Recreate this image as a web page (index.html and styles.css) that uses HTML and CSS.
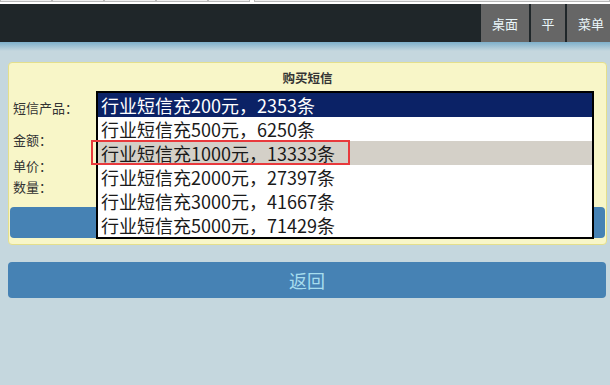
FILE: index.html
```html
<!DOCTYPE html>
<html lang="zh-CN">
<head>
    <meta charset="UTF-8">
    <meta name="viewport" content="width=device-width, initial-scale=1.0">
    <title>购买短信</title>
    <link rel="stylesheet" href="styles.css">
</head>
<body>
    <div class="top-strip">
        <span class="tab"></span>
        <span class="tab"></span>
        <span class="tab"></span>
        <span class="tab"></span>
        <span class="tab gap"></span>
        <span class="tab wide"></span>
    </div>

    <div class="header">
        <div class="nav">
            <a class="nav-item desk">桌面</a>
            <a class="nav-item flat">平</a>
            <a class="nav-item menu">菜单</a>
        </div>
    </div>
    <div class="header-shade"></div>

    <div class="card">
        <div class="card-title">购买短信</div>

        <div class="row row-product"><span class="label">短信产品：</span></div>
        <div class="row row-amount"><span class="label">金额：</span></div>
        <div class="row row-price"><span class="label">单价：</span></div>
        <div class="row row-count"><span class="label">数量：</span></div>

        <div class="buy-btn"></div>

        <!-- opened select dropdown -->
        <ul class="dropdown">
            <li class="selected">行业短信充200元，2353条</li>
            <li>行业短信充500元，6250条</li>
            <li class="hover">行业短信充1000元，13333条</li>
            <li>行业短信充2000元，27397条</li>
            <li>行业短信充3000元，41667条</li>
            <li>行业短信充5000元，71429条</li>
        </ul>
        <div class="mark"></div>
    </div>

    <div class="back-btn">返回</div>
</body>
</html>
```

FILE: styles.css
```css
body {
    margin: 0;
    width: 610px;
    overflow: hidden;
    background-color: #c5d7de;
    font-family: "Microsoft YaHei", "Noto Sans CJK SC", sans-serif;
    color: #333;
    text-spacing-trim: space-all;
}

/* strip of the page above */
.top-strip {
    height: 4px;
    background-color: #fff;
    display: flex;
}

.top-strip .tab {
    width: 50px;
    height: 1px;
    border: 1px solid #b8b8b8;
    border-top: none;
    background-color: #eee;
}

.top-strip .gap {
    width: 40px;
    margin-right: 4px;
}

.top-strip .wide {
    flex: 1;
}

/* Header */
.header {
    height: 38px;
    background-color: #1f2629;
    display: flex;
}

.nav {
    margin-left: auto;
    display: flex;
    gap: 2px;
}

.nav-item {
    display: flex;
    align-items: center;
    justify-content: center;
    background-color: #666;
    color: #eaf6fa;
    font-size: 13px;
}

.nav-item.desk {
    width: 48px;
}

.nav-item.flat {
    width: 34px;
}

.nav-item.menu {
    width: 32px;
    padding-left: 11px;
    justify-content: flex-start;
}

.header-shade {
    height: 9px;
    background: linear-gradient(#7eb0cb, #c5d7de);
}

/* Card */
.card {
    position: relative;
    box-sizing: border-box;
    width: 599px;
    margin: 11px 0 0 8px;
    padding: 7px 1px 6px;
    background-color: #f8f6c8;
    border: 1px solid #e4df8c;
    border-radius: 4px;
}

.card-title {
    height: 16px;
    line-height: 16px;
    text-align: center;
    font-size: 12.5px;
    font-weight: bold;
}

/* centred full-width punctuation, like the original font */
.row,
.dropdown li {
    font-family: "Microsoft YaHei", "Noto Sans CJK TC", "Noto Sans CJK SC", sans-serif;
}

.row {
    display: flex;
    align-items: center;
    padding-left: 3px;
    font-size: 13px;
}

.row-product {
    height: 22px;
    margin-top: 10px;
}

.row-amount {
    height: 22px;
    margin-top: 10px;
}

.row-price {
    height: 18px;
    margin-top: 6px;
}

.row-count {
    height: 18px;
    margin-top: 3px;
}

.buy-btn {
    height: 31px;
    margin-top: 12px;
    background-color: #4682b4;
    border-radius: 4px;
}

/* Dropdown list */
.dropdown {
    position: absolute;
    left: 87px;
    top: 28px;
    width: 498px;
    margin: 0;
    padding: 0;
    list-style: none;
    box-sizing: border-box;
    border: 2px solid #000;
    background-color: #fff;
}

.dropdown li {
    height: 24px;
    line-height: 24px;
    padding-left: 3px;
    font-size: 18px;
    color: #1a1a1a;
    white-space: nowrap;
}

.dropdown li.selected {
    background-color: #0b2266;
    color: #fff;
}

.dropdown li.hover {
    background-color: #d4d0c8;
}

.mark {
    position: absolute;
    left: 82px;
    top: 77px;
    width: 255px;
    height: 21px;
    border: 2.5px solid #e8393c;
}

/* Back button */
.back-btn {
    width: 598px;
    height: 36px;
    margin: 17px 0 0 8px;
    line-height: 36px;
    text-align: center;
    background-color: #4682b4;
    border-radius: 4px;
    color: #a6ddee;
    font-size: 18px;
}
```
